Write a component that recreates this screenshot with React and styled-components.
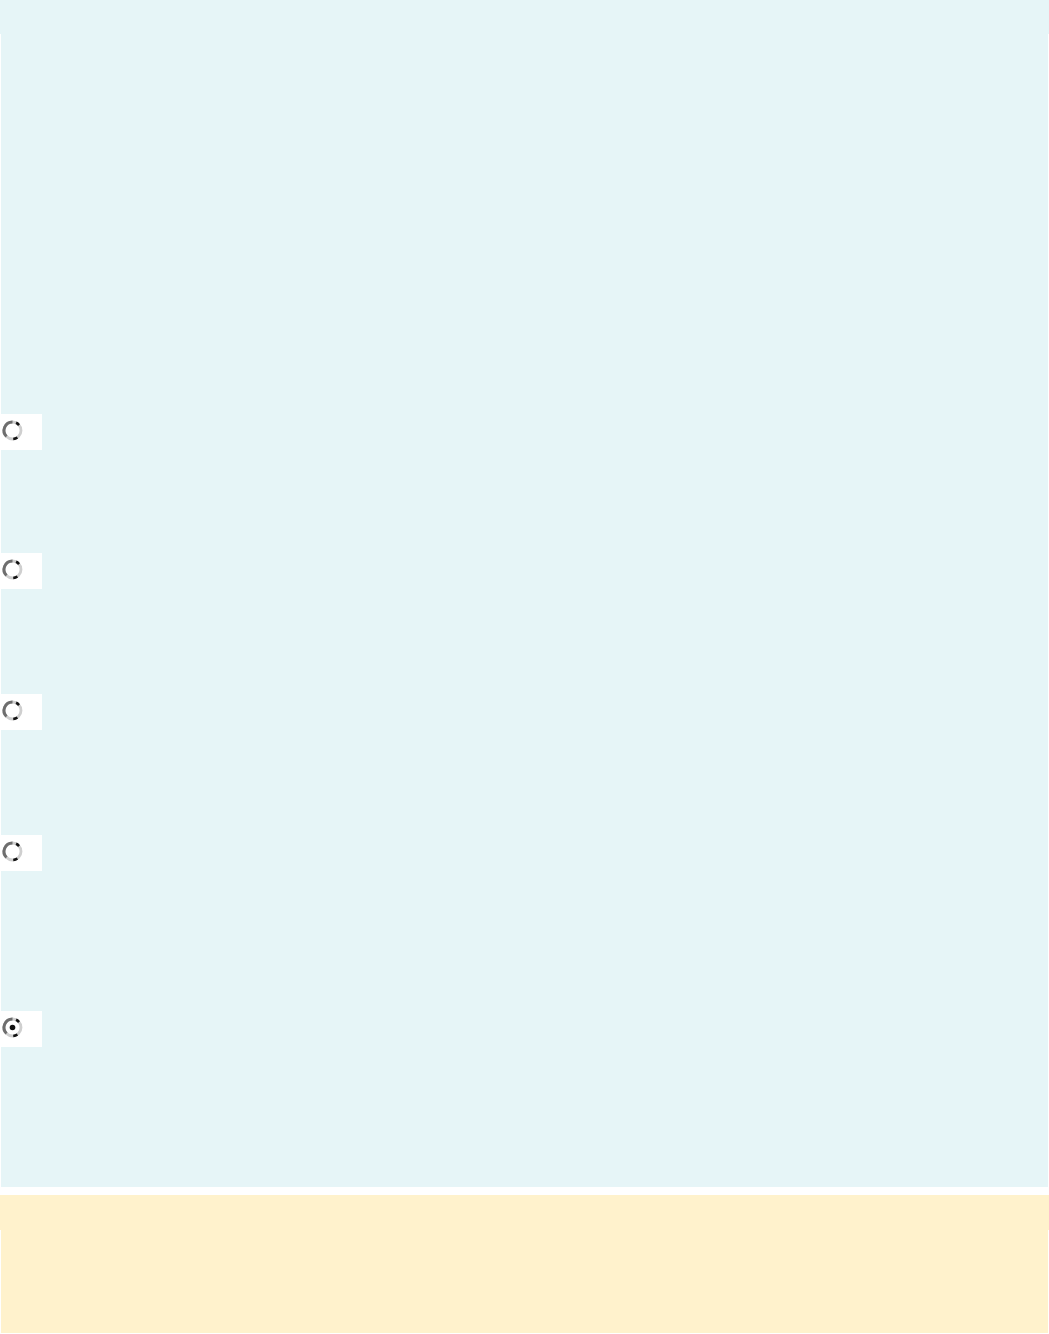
import React from 'react';
import styled, { createGlobalStyle } from 'styled-components';

const GlobalStyle = createGlobalStyle`
  html, body {
    margin: 0;
    padding: 0;
    background: #fff;
    font-family: "Liberation Sans", Arial, sans-serif;
  }
`;

const Page = styled.div`
  width: 1049px;
  height: 1334px;
  display: flex;
  flex-direction: column;
  background: #fff;
`;

const Panel = styled.section`
  display: flex;
  flex-direction: column;
  height: ${p => p.$height}px;
  margin-bottom: ${p => p.$gap || 0}px;
`;

const PanelHead = styled.div`
  height: ${p => p.$height}px;
  background: ${p => p.$tone};
  flex-shrink: 0;
`;

const PanelBody = styled.div`
  flex: 1;
  margin: 0 1px;
  background: ${p => p.$tone};
  display: flex;
  flex-direction: column;
  padding-top: ${p => p.$padTop || 0}px;
`;

const OptionRow = styled.div`
  height: ${p => p.$height}px;
  flex-shrink: 0;
  display: flex;
  align-items: flex-start;
`;

const RadioCell = styled.label`
  width: 42px;
  height: 36px;
  margin-left: -1px;
  background: #fff;
  display: block;
  cursor: pointer;
`;

// hand drawn copy of the old style radio glyph
const RadioMark = ({ checked }) => (
  <svg width="42" height="36" viewBox="0 0 42 36">
    <circle cx="12.5" cy="16.5" r="8.5" fill="#fff" stroke="#cfcfcf" strokeWidth="2.8" />
    <path d="M12.5 8 A8.5 8.5 0 0 0 6.5 22.5" fill="none" stroke="#6e6e6e" strokeWidth="3" />
    <path d="M16.09 8.8 A8.5 8.5 0 0 1 19.01 11.04" fill="none" stroke="#111" strokeWidth="2.6" />
    <path d="M17.38 23.46 A8.5 8.5 0 0 1 13.24 24.97" fill="none" stroke="#111" strokeWidth="2.6" />
    {checked && <circle cx="12.5" cy="16.5" r="2.8" fill="#111" />}
  </svg>
);

const options = [
  { height: 139 },
  { height: 141 },
  { height: 141 },
  { height: 176 },
  { height: 175, checked: true },
];

const CYAN = '#e6f5f7';
const CREAM = '#fff2cc';

const App = () => {
  return (
    <>
      <GlobalStyle />
      <Page>
        <Panel $height={1187} $gap={8}>
          <PanelHead $tone={CYAN} $height={34} />
          <PanelBody $tone={CYAN} $padTop={380}>
            {options.map((o, i) => (
              <OptionRow key={i} $height={o.height}>
                <RadioCell>
                  <RadioMark checked={o.checked} />
                </RadioCell>
              </OptionRow>
            ))}
          </PanelBody>
        </Panel>

        <Panel $height={138}>
          <PanelHead $tone={CREAM} $height={35} />
          <PanelBody $tone={CREAM} />
        </Panel>
      </Page>
    </>
  );
};

export default App;
